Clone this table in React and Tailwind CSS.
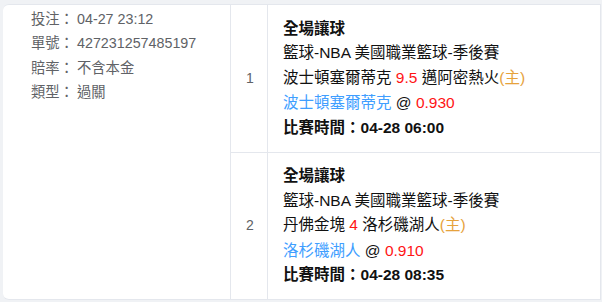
import React from "react";

const font = { fontFamily: '"Liberation Sans", Arial, "Noto Sans CJK TC", sans-serif' };

function Info({ label, value }) {
  return (
    <div className="flex h-[24.3px] items-center">
      <span className="w-[46px] shrink-0">{label}</span>
      <span>{value}</span>
    </div>
  );
}

function Bet({ n, home, line, away, pick, odds, time }) {
  return (
    <div className="flex flex-1 border-b border-[#e4e7ed] last:border-b-0">
      <div className="flex w-[37px] shrink-0 items-center justify-center border-r border-[#e4e7ed] pl-[2px] text-[14px] text-[#606266]">
        {n}
      </div>
      <div className="flex flex-1 flex-col justify-center pl-[15px] text-[15.5px] leading-[24.5px] text-[#111]">
        <div className="font-bold">全場讓球</div>
        <div>籃球-NBA 美國職業籃球-季後賽</div>
        <div>
          {home} <span className="text-[#ff1414]">{line}</span> {away}
          <span className="text-[#e6a23c]">(主)</span>
        </div>
        <div className="mt-[1px]">
          <span className="text-[#409eff]">{pick}</span> @ <span className="text-[#ff1414]">{odds}</span>
        </div>
        <div className="font-bold">比賽時間：{time}</div>
      </div>
    </div>
  );
}

export default function App() {
  return (
    <div className="h-[302px] w-[602px] bg-[#f0f2f5] pl-[3px] pt-[4px]" style={font}>
      <div className="flex h-[296px] w-[598px] rounded-l-[6px] border border-l-0 border-[#e4e7ed] bg-white">
        <div className="w-[228px] shrink-0 border-r border-[#e4e7ed] pl-[28px] pt-[2.5px] text-[14.3px] text-[#606266]">
          <Info label="投注：" value="04-27 23:12" />
          <Info label="單號：" value="427231257485197" />
          <Info label="賠率：" value="不含本金" />
          <Info label="類型：" value="過關" />
        </div>
        <div className="flex flex-1 flex-col">
          <Bet n="1" home="波士頓塞爾蒂克" line="9.5" away="邁阿密熱火" pick="波士頓塞爾蒂克" odds="0.930" time="04-28 06:00" />
          <Bet n="2" home="丹佛金塊" line="4" away="洛杉磯湖人" pick="洛杉磯湖人" odds="0.910" time="04-28 08:35" />
        </div>
      </div>
    </div>
  );
}
